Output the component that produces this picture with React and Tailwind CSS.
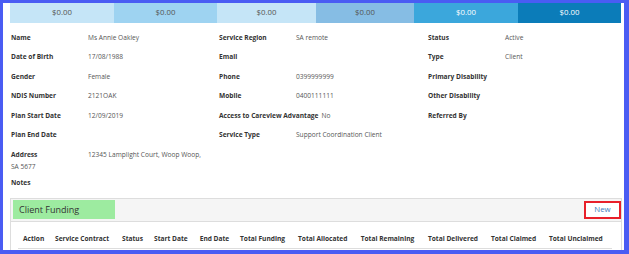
import React from "react";

const stats = [
  { w: "w-[104px]", bg: "bg-[#c5e5f7]", t: "text-[#555555]" },
  { w: "w-[103px]", bg: "bg-[#9ed3f1]", t: "text-[#555555]" },
  { w: "w-[99px]", bg: "bg-[#c5e5f7]", t: "text-[#555555]" },
  { w: "w-[98px]", bg: "bg-[#86bde4]", t: "text-[#555555]" },
  { w: "w-[104px]", bg: "bg-[#3ba7dc]", t: "text-white" },
  { w: "flex-1", bg: "bg-[#0b7cb9]", t: "text-white" },
];

const rows = [
  [["Name", "Ms Annie Oakley"], ["Service Region", "SA remote"], ["Status", "Active"]],
  [["Date of Birth", "17/08/1988"], ["Email", ""], ["Type", "Client"]],
  [["Gender", "Female"], ["Phone", "0399999999"], ["Primary Disability", ""]],
  [["NDIS Number", "2121OAK"], ["Mobile", "0400111111"], ["Other Disability", ""]],
  [["Plan Start Date", "12/09/2019"], ["Access to Careview Advantage", "No"], ["Referred By", ""]],
  [["Plan End Date", ""], ["Service Type", "Support Coordination Client"], null],
];

const cols = [
  ["Action", "w-[32px]"],
  ["Service Contract", "w-[67px]"],
  ["Status", "w-[32px]"],
  ["Start Date", "w-[45.7px]"],
  ["End Date", "w-[40.3px]"],
  ["Total Funding", "w-[58px]"],
  ["Total Allocated", "w-[62.7px]"],
  ["Total Remaining", "w-[67.3px]"],
  ["Total Delivered", "w-[63px]"],
  ["Total Claimed", "w-[58px]"],
  ["Total Unclaimed", ""],
];

function Field({ f }) {
  if (!f) return <div />;
  return (
    <div className="flex items-center pl-[1px]">
      <span className="min-w-[77px] pr-[3px] font-bold text-[#333333] whitespace-nowrap">{f[0]}</span>
      <span className="text-[#555555] whitespace-nowrap">{f[1]}</span>
    </div>
  );
}

export default function App() {
  return (
    <div
      className="w-[629px] h-[254px] overflow-hidden bg-white border-l-[3px] border-t-[3px] border-r-[5px] border-b-[4px] border-[#4a5cf3] pl-[7px] pr-[3px]"
      style={{ fontFamily: '"Open Sans", sans-serif' }}
    >
      <div className="flex h-[20px]">
        {stats.map((s, i) => (
          <div key={i} className={`${s.w} ${s.bg} ${s.t} flex items-center justify-center text-[7.8px]`}>
            $0.00
          </div>
        ))}
      </div>

      <div className="pt-[5px] text-[6.6px] leading-[10px]">
        <div className="grid grid-cols-[208px_209px_1fr] auto-rows-[19.5px]">
          {rows.map((r, i) => r.map((f, j) => <Field key={`${i}-${j}`} f={f} />))}
        </div>
        <div className="pt-[4px] leading-[11.5px] pl-[1px]">
          <span className="inline-block min-w-[77px] font-bold text-[#333333]">Address</span>
          <span className="text-[#555555]">12345 Lamplight Court, Woop Woop,</span>
          <div className="text-[#555555]">SA 5677</div>
        </div>
        <div className="mt-[5px] mb-[9px] leading-[11.5px] pl-[1px] font-bold text-[#333333]">Notes</div>
      </div>

      <div className="border border-[#dddddd] h-[60px] mr-[-1px]">
        <div className="h-[23px] bg-[#f5f5f5] border-b border-[#dddddd] flex items-center justify-between pl-[2px]">
          <div className="w-[102px] h-[19px] bg-[#9deba0] flex items-center pl-[6px] text-[9px] text-[#333333]">
            Client Funding
          </div>
          <div className="w-[37px] h-[18px] border-2 border-[#e8202a] flex items-center justify-center text-[7.8px] text-[#3d7bbd] bg-white">
            New
          </div>
        </div>
        <div className="pt-[12px] ml-[7px] mr-[9px]">
          <div className="flex border-b border-[#dddddd] pb-[4px] pl-[5px] text-[6.6px] leading-[10px] font-bold text-[#333333] whitespace-nowrap">
            {cols.map(([c, w]) => (
              <span key={c} className={`${w} shrink-0`}>{c}</span>
            ))}
          </div>
        </div>
      </div>
    </div>
  );
}
